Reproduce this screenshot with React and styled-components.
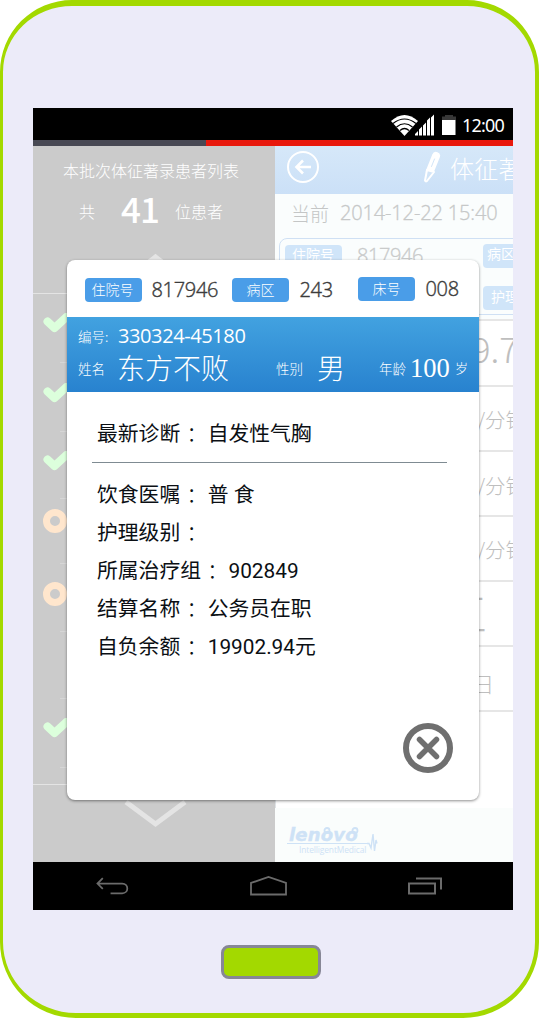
import React from "react";
import styled, { createGlobalStyle } from "styled-components";

const cjk = `"Noto Sans CJK SC", sans-serif`;
const numeric = `"Open Sans", "Noto Sans CJK SC", sans-serif`;

const GlobalStyle = createGlobalStyle`
  * { box-sizing: border-box; }
  body { margin: 0; background: #fff; font-family: ${cjk}; }
  svg { display: block; flex: none; }
`;

const Device = styled.main`
  display: flex;
  flex-direction: column;
  align-items: flex-start;
  width: 539px;
  height: 1018px;
  padding: 102px 0 0 30px;
  background: #ecebf9;
  border: solid #a3d900;
  border-width: 6px 4px 5px 3px;
  border-radius: 72px 72px 76px 76px;
  overflow: hidden;
`;

const Screen = styled.section`
  display: flex;
  flex-direction: column;
  flex: none;
  width: 480px;
  height: 802px;
  background: #000;
`;

const HomeKey = styled.div`
  flex: none;
  width: 100px;
  height: 34px;
  margin: 35px 0 0 188px;
  background: #a3d900;
  border: 3px solid #878796;
  border-radius: 8px;
`;

const StatusBar = styled.header`
  display: flex;
  justify-content: flex-end;
  align-items: center;
  flex: none;
  height: 32px;
  padding: 2px 8px 0 0;
  color: #fff;
`;

const Clock = styled.span`
  width: 43px;
  margin-left: 6px;
  font: 18px/20px "Noto Sans", sans-serif;
  letter-spacing: -0.8px;
  white-space: nowrap;
`;

const Progress = styled.div`
  flex: none;
  height: 6px;
  background: linear-gradient(90deg, #484954 173px, #e8180c 173px);
`;

const Content = styled.div`
  position: relative;
  display: grid;
  grid-template-columns: 242px 238px;
  flex: none;
  height: 716px;
`;

const Sidebar = styled.aside`
  display: flex;
  flex-direction: column;
  background: #cbcbcb;
  color: #fff;
  overflow: hidden;
`;

const SideTitle = styled.h1`
  height: 18px;
  margin: 15px 0 0 30px;
  font-size: 16px;
  line-height: 18px;
  font-weight: 300;
  white-space: nowrap;
`;

const SideCount = styled.div`
  display: grid;
  grid-template-columns: 42px 54px 60px;
  align-items: center;
  height: 40px;
  margin: 12px 0 0 46px;
  font-size: 16px;
  font-weight: 300;
  line-height: 1;
`;

const CountNumber = styled.strong`
  font-size: 35px;
  font-weight: 500;
  line-height: 36px;
  letter-spacing: -1px;
  margin-top: -7px;
`;

const ArrowSlot = styled.div`
  flex: none;
  height: ${(p) => p.$height}px;
  padding: ${(p) => p.$top}px 0 0 91px;
`;

const PatientList = styled.div`
  flex: none;
  height: 492px;
  border-top: 1px solid #e4e4e4;
  border-bottom: 1px solid #e4e4e4;
`;

const PatientRow = styled.div`
  height: ${(p) => p.$height}px;
  padding: ${(p) => p.$top}px 0 0 ${(p) => (p.$ring ? 10 : 9)}px;
  background: linear-gradient(#d6d6d6, #d6d6d6) 27px 100% / 200px 1px no-repeat;
`;

const Ring = styled.i`
  display: block;
  width: 24px;
  height: 24px;
  border: 7px solid #ffe6cd;
  border-radius: 50%;
`;

const Record = styled.section`
  display: flex;
  flex-direction: column;
  background: #fff;
  overflow: hidden;
  box-shadow: inset 1px 0 #dfe3e6;
`;

const RecordHeader = styled.header`
  display: flex;
  flex: none;
  height: 48px;
  padding: 5px 0 0 12px;
  background: linear-gradient(#d6e8f9, #cbe0f7);
  color: #fff;
`;

const RecordTitle = styled.h2`
  margin: 1px 0 0 9px;
  font-size: 24px;
  line-height: 32px;
  font-weight: 300;
  letter-spacing: 0.3px;
  white-space: nowrap;
`;

const PenIcon = styled.svg`
  margin-left: 103px;
`;

const DateRow = styled.div`
  display: grid;
  grid-template-columns: 49px 1fr;
  align-items: center;
  flex: none;
  height: 44px;
  padding: 0 0 6px 16px;
  background: #fafdfd;
  color: #c4c6c6;
  font: 300 19px/24px ${cjk};
`;

const DateText = styled.time`
  font: 300 20px/24px ${numeric};
  letter-spacing: -0.15px;
  white-space: nowrap;
  -webkit-text-stroke: 0.3px #c9cbcb;
`;

const SummaryWrap = styled.div`
  flex: none;
  height: 83px;
  padding-left: 4px;
  background: #fafdfd;
  border-bottom: 2px solid #e6e6e6;
`;

const Summary = styled.div`
  display: grid;
  grid-template-columns: 72px 126px 58px;
  grid-template-rows: 42px 30px;
  width: 270px;
  height: 77px;
  padding: 5px 0 0 5px;
  border: 1px solid #cfe0f4;
  border-radius: 8px;
`;

const Badge = styled.span`
  width: 57px;
  height: 24px;
  padding-left: ${(p) => p.$indent}px;
  border-radius: 4px;
  background: ${(p) => (p.$pale ? "#d0e5f9" : "#4a9de8")};
  color: #fff;
  font-size: 14px;
  line-height: ${(p) => p.$line || 22}px;
  font-weight: ${(p) => (p.$pale ? 400 : 300)};
  white-space: nowrap;
  margin-top: ${(p) => p.$top || 0}px;
`;

const PaleNumber = styled.span`
  color: #c9cbcb;
  font: 300 20px/23px ${numeric};
  letter-spacing: -0.4px;
  -webkit-text-stroke: 0.3px #c9cbcb;
`;

const VitalRow = styled.div`
  display: flex;
  align-items: center;
  flex: none;
  height: ${(p) => p.$height}px;
  padding-left: ${(p) => p.$left}px;
  padding-top: ${(p) => p.$down || 0}px;
  padding-bottom: ${(p) => p.$up || 0}px;
  border-bottom: 2px solid #e6e6e6;
  color: #bebebe;
  font-size: ${(p) => p.$size}px;
  line-height: 1;
  font-weight: 300;
  white-space: nowrap;
`;

const RecordFooter = styled.footer`
  display: flex;
  align-items: flex-start;
  height: 54px;
  margin-top: auto;
  padding: 17px 0 0 12px;
  background: #fafdfc;
`;

const Brand = styled.div`
  position: relative;
  display: flex;
  flex-direction: column;
  width: 80px;
  color: #cee2f6;
`;

const BrandName = styled.b`
  height: 19px;
  padding-left: 2px;
  font: italic 700 18px/20px "DejaVu Sans", sans-serif;
  letter-spacing: 0.2px;
  border-bottom: 1px solid #cee2f6;
  -webkit-text-stroke: 0.4px #cee2f6;
`;

const BrandLoops = styled.svg`
  position: absolute;
  left: 34px;
  top: 2px;
`;

const BrandSub = styled.small`
  padding-left: 12px;
  font: 8.4px/12px "Open Sans", sans-serif;
  white-space: nowrap;
  letter-spacing: -0.1px;
`;

const Dialog = styled.section`
  position: absolute;
  left: 34px;
  top: 114px;
  display: flex;
  flex-direction: column;
  width: 412px;
  height: 540px;
  border-radius: 8px;
  background: #fff;
  box-shadow: 0 1px 3px rgba(0, 0, 0, 0.45);
`;

const DialogHead = styled.div`
  display: grid;
  grid-template-columns: 67px 80px 68px 58px 68px 40px;
  align-items: center;
  flex: none;
  height: 57px;
  padding: 3px 0 0 17.5px;
`;

const HeadNumber = styled.span`
  color: #3c3c3c;
  font: 300 20px/24px ${numeric};
  letter-spacing: -0.3px;
  -webkit-text-stroke: 0.4px #3c3c3c;
  margin-top: ${(p) => p.$top || 0}px;
`;

const Identity = styled.div`
  flex: none;
  height: 75px;
  padding: 5px 0 0 11px;
  background: linear-gradient(#42a2e0, #2882cf);
  color: #fff;
`;

const IdentityLine = styled.div`
  display: grid;
  grid-template-columns: ${(p) => p.$columns};
  align-items: center;
  height: ${(p) => p.$height}px;
  white-space: nowrap;
`;

const IdentityLabel = styled.span`
  font-size: ${(p) => p.$size || 13.5}px;
  line-height: 20px;
  font-weight: 300;
`;

const IdentityNumber = styled.span`
  font: 400 20px/24px ${numeric};
  letter-spacing: -0.4px;
  margin-top: -1px;
`;

const IdentityValue = styled.span`
  font-size: 28px;
  line-height: 34px;
  font-weight: 300;
  margin-top: -2px;
`;

const Age = styled.span`
  font: 26.5px/24px "Liberation Serif", serif;
`;

const Details = styled.dl`
  display: flex;
  flex-direction: column;
  flex: 1;
  margin: 0;
  padding: 23px 32px 0 30px;
`;

const Detail = styled.div`
  display: flex;
  align-items: center;
  flex: none;
  height: 38px;
  color: #0b0f14;
  font: 400 20.8px/38px Roboto, ${cjk};
  white-space: nowrap;
`;

const Term = styled.dt`
  display: flex;
`;

const Colon = styled.span`
  width: 27.5px;
  padding-left: 1px;
  font-family: "Noto Sans CJK JP", sans-serif;
  font-weight: 300;
`;

const Value = styled.dd`
  margin: 0;
`;

const Divider = styled.hr`
  width: 355px;
  height: 1px;
  margin: 9px 0 13px -5px;
  border: 0;
  flex: none;
  background: #7f8b92;
`;

const CloseButton = styled.button`
  align-self: flex-end;
  width: 50px;
  height: 50px;
  margin: auto 26px 27px 0;
  padding: 0;
  border: 0;
  background: none;
`;

const NavBar = styled.nav`
  display: flex;
  align-items: center;
  flex: none;
  height: 48px;
  padding: 0 71px 0 63px;
  justify-content: space-between;
`;

const CheckIcon = () => (
  <svg width="32" height="23" viewBox="0 0 32 23" fill="none">
    <path d="M5.500 8.500 12.500 15 25 3.500" stroke="#dcffdc" strokeWidth="8" strokeLinecap="round" strokeLinejoin="round" />
  </svg>
);

const patients = [
  { height: 69, top: 19, done: true },
  { height: 69, top: 20, done: true },
  { height: 67, top: 19, done: true },
  { height: 65, top: 10, done: false },
  { height: 68, top: 18, done: false },
  { height: 67, top: 0 },
  { height: 69, top: 19, done: true },
];

const details = [
  ["饮食医嘱", "普 食"],
  ["护理级别", ""],
  ["所属治疗组", "902849"],
  ["结算名称", "公务员在职"],
  ["自负余额", "19902.94元"],
];

const DetailRow = ({ term, value }) => (
  <Detail>
    <Term>
      {term}
      <Colon>：</Colon>
    </Term>
    <Value>{value}</Value>
  </Detail>
);

export default function App() {
  return (
    <>
      <GlobalStyle />
      <Device>
        <Screen>
          <StatusBar>
            <svg width="66" height="24" viewBox="0 0 66 24">
              <path d="M1 8Q14.500-4 28 8L14.500 23Z" fill="#fff" />
              <path d="M3 10.500Q14.500 1.500 26 10.500M6.500 14Q14.500 7.500 22.500 14M10 17.500Q14.500 13.500 19 17.500" fill="none" stroke="#000" strokeWidth="1.200" />
              <path d="M25 22.500V21l3-3v4.500ZM29 22.500v-6l3-3v9ZM33 22.500V12.500l3-3v13ZM37 22.500V7.500l3-3v18ZM41 22.500V4.500l3-3v21Z" fill="#fff" />
              <path d="M52 7V3.500h3V2h8v1.500h3V7Z" fill="#383838" />
              <path d="M52 7h13.500v15H52Z" fill="#fff" />
            </svg>
            <Clock>12:00</Clock>
          </StatusBar>
          <Progress />
          <Content>
            <Sidebar>
              <SideTitle>本批次体征著录患者列表</SideTitle>
              <SideCount>
                <span>共</span>
                <CountNumber>41</CountNumber>
                <span>位患者</span>
              </SideCount>
              <ArrowSlot $height={62} $top={22}>
                <svg width="64" height="30" viewBox="0 0 64 30" fill="none">
                  <path d="M2 27 31.500 4 61 27" stroke="#e4e4e4" strokeWidth="5" />
                </svg>
              </ArrowSlot>
              <PatientList>
                {patients.map((p, i) => (
                  <PatientRow key={i} $height={p.height} $top={p.top} $ring={p.done === false}>
                    {p.done === true && <CheckIcon />}
                    {p.done === false && <Ring />}
                  </PatientRow>
                ))}
              </PatientList>
              <ArrowSlot $height={76} $top={13}>
                <svg width="64" height="32" viewBox="0 0 64 32" fill="none">
                  <path d="M2 4 31.500 26 61 4" stroke="#e4e4e4" strokeWidth="5" />
                </svg>
              </ArrowSlot>
            </Sidebar>
            <Record>
              <RecordHeader>
                <svg width="32" height="32" viewBox="0 0 32 32" fill="none" stroke="#fff" strokeWidth="2">
                  <circle cx="16" cy="16" r="15" />
                  <path d="M24 16H10M16 9.500 9.500 16l6.500 6.500" strokeWidth="2.600" />
                </svg>
                <PenIcon width="19" height="33" viewBox="0 0 19 33" fill="none" strokeLinecap="round">
                  <path d="M14 5 8 20" stroke="#fff" strokeWidth="8" />
                  <path d="M5 19 3 29.500Q3.500 31 5 30L12 21Z" fill="#d2e5f8" stroke="#fff" strokeWidth="2" strokeLinejoin="round" />
                  <path d="M12.500 8 9.500 15.500" stroke="#d2e5f8" strokeWidth="1" />
                </PenIcon>
                <RecordTitle>体征著录</RecordTitle>
              </RecordHeader>
              <DateRow>
                <span>当前</span>
                <DateText>2014-12-22 15:40</DateText>
              </DateRow>
              <SummaryWrap>
                <Summary>
                  <Badge $pale $top={1} $indent={7} $line={18}>住院号</Badge>
                  <PaleNumber>817946</PaleNumber>
                  <Badge $pale $indent={4} $line={19}>病区</Badge>
                  <span />
                  <span />
                  <Badge $pale $indent={8} $line={20}>护理</Badge>
                </Summary>
              </SummaryWrap>
              <VitalRow $height={66} $left={178} $size={35} $up={12}>39.7</VitalRow>
              <VitalRow $height={65} $left={202} $size={20.5} $down={2}>/分钟</VitalRow>
              <VitalRow $height={65} $left={202} $size={20.5} $down={3}>/分钟</VitalRow>
              <VitalRow $height={65} $left={202} $size={20.5} $down={1}>/分钟</VitalRow>
              <VitalRow $height={65} $left={165} $size={47} $up={7}>工</VitalRow>
              <VitalRow $height={65} $left={198} $size={21} $down={10}>日</VitalRow>
              <RecordFooter>
                <Brand>
                  <BrandName>lenovo</BrandName>
                  <BrandLoops width="42" height="7" viewBox="0 0 42 7" fill="none" stroke="#cee2f6" strokeWidth="1.800">
                    <circle cx="6" cy="3.500" r="2.500" />
                    <circle cx="34" cy="3.500" r="2.500" />
                  </BrandLoops>
                  <BrandSub>IntelligentMedical</BrandSub>
                </Brand>
                <svg width="13" height="30" viewBox="0 0 13 30" fill="none">
                  <path d="M0 18.500H2L4 23 6 9 7.500 26 9 15 10 18.500" stroke="#cee2f6" strokeWidth="1.400" />
                </svg>
              </RecordFooter>
            </Record>
            <Dialog role="dialog">
              <DialogHead>
                <Badge $indent={7}>住院号</Badge>
                <HeadNumber>817946</HeadNumber>
                <Badge $indent={15}>病区</Badge>
                <HeadNumber>243</HeadNumber>
                <Badge $top={-2} $indent={15}>床号</Badge>
                <HeadNumber $top={-2}>008</HeadNumber>
              </DialogHead>
              <Identity>
                <IdentityLine $height={28} $columns="40px 1fr">
                  <IdentityLabel>编号:</IdentityLabel>
                  <IdentityNumber>330324-45180</IdentityNumber>
                </IdentityLine>
                <IdentityLine $height={36} $columns="39px 159px 41px 62px 31px 45px 20px">
                  <IdentityLabel>姓名</IdentityLabel>
                  <IdentityValue>东方不败</IdentityValue>
                  <IdentityLabel>性别</IdentityLabel>
                  <IdentityValue>男</IdentityValue>
                  <IdentityLabel>年龄</IdentityLabel>
                  <Age>100</Age>
                  <IdentityLabel $size={13}>岁</IdentityLabel>
                </IdentityLine>
              </Identity>
              <Details>
                <DetailRow term="最新诊断" value="自发性气胸" />
                <Divider />
                {details.map(([term, value]) => (
                  <DetailRow key={term} term={term} value={value} />
                ))}
              </Details>
              <CloseButton aria-label="关闭">
                <svg width="50" height="50" viewBox="0 0 50 50" fill="none" stroke="#6f6f6f">
                  <circle cx="25" cy="25" r="22" strokeWidth="6" />
                  <path d="M16.500 16.500 33.500 33.500M33.500 16.500 16.500 33.500" strokeWidth="5.500" strokeLinecap="round" />
                </svg>
              </CloseButton>
            </Dialog>
          </Content>
          <NavBar>
            <svg width="33" height="18" viewBox="0 0 34 18" fill="none" stroke="#6b6b6b" strokeWidth="1.800">
              <path d="M7 1 1.500 6.500 7 12M2 6.500H27C34 6.500 34 16.500 27 16.500H15" />
            </svg>
            <svg width="37" height="20" viewBox="0 0 37 20" fill="none" stroke="#6b6b6b" strokeWidth="1.800">
              <path d="M1 18.500V7L18.500 1 36 7V18.500Z" />
            </svg>
            <svg width="34" height="18" viewBox="0 0 34 18" fill="none" stroke="#6b6b6b" strokeWidth="2">
              <path d="M1 6.500H27V16.500H1ZM8 1.500H33V12.500" />
            </svg>
          </NavBar>
        </Screen>
        <HomeKey />
      </Device>
    </>
  );
}
